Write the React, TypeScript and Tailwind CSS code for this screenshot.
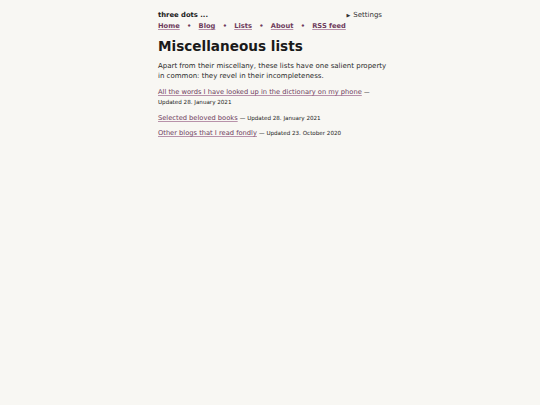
import React from "react";

export default function App() {
  const link = "text-[#6e3b5c] underline decoration-[#b892aa] underline-offset-[1px]";
  return (
    <div className="min-h-[405px] w-full bg-[#f8f7f3] text-[#1a1a1a]" style={{ fontFamily: '"DejaVu Sans", sans-serif' }}>
      <div className="ml-[158px] w-[232px] pt-[10px]">
        <div className="flex w-[224px] items-start justify-between">
          <div>
            <div className="text-[6.8px] font-bold leading-[10px]">three dots ...</div>
            <nav className="mt-[1px] flex items-center gap-[7.3px] whitespace-nowrap text-[6.7px] font-bold leading-[10px]">
              <a className={link}>Home</a>
              <span className="text-[#6e3b5c]">•</span>
              <a className={link}>Blog</a>
              <span className="text-[#6e3b5c]">•</span>
              <a className={link}>Lists</a>
              <span className="text-[#6e3b5c]">•</span>
              <a className={link}>About</a>
              <span className="text-[#6e3b5c]">•</span>
              <a className={link}>RSS feed</a>
            </nav>
          </div>
          <div className="flex items-center gap-[3px] whitespace-nowrap text-[7px] leading-[10px] text-[#333333]">
            <span className="text-[5px]">▶</span>
            <span>Settings</span>
          </div>
        </div>
        <h1 className="mt-[7px] text-[13.6px] font-bold leading-[17px]">Miscellaneous lists</h1>
        <p className="mt-[6px] text-[7px] leading-[10px] text-[#2a2a2a]">
          Apart from their miscellany, these lists have one salient property in common: they revel in their incompleteness.
        </p>
        <ul className="mt-[6px] text-[6.7px] leading-[10px]">
          <li className="mb-[6px]"><a className={link}>All the words I have looked up in the dictionary on my phone</a> <span className="text-[5.6px]">— Updated 28. January 2021</span></li>
          <li className="mb-[5px]"><a className={link}>Selected beloved books</a> <span className="text-[5.6px]">— Updated 28. January 2021</span></li>
          <li><a className={link}>Other blogs that I read fondly</a> <span className="text-[5.6px]">— Updated 23. October 2020</span></li>
        </ul>
      </div>
    </div>
  );
}
